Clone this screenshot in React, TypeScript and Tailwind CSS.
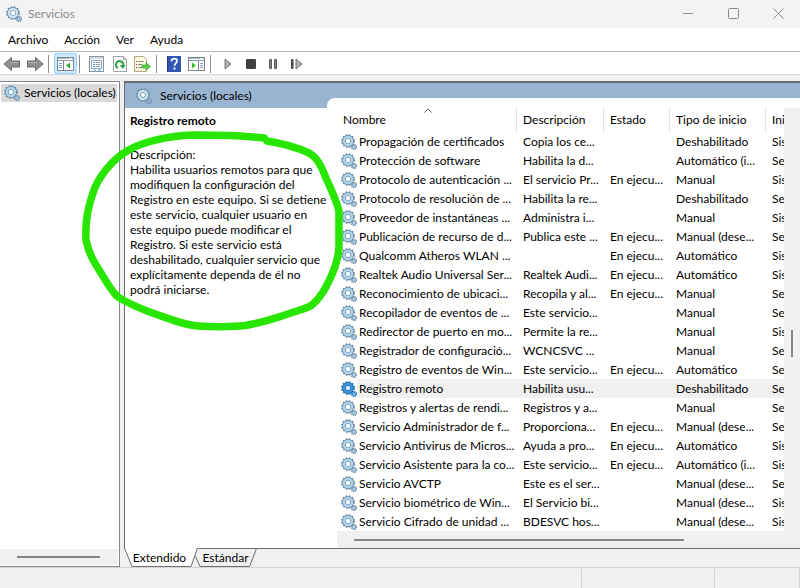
import React, { useState } from "react";

type Service = {
  name: string;
  description: string;
  status: string;
  startup: string;
  logon: string;
};

const running = "En ejecu...";

const services: Service[] = [
  { name: "Propagación de certificados", description: "Copia los ce...", status: "", startup: "Deshabilitado", logon: "Sistema local" },
  { name: "Protección de software", description: "Habilita la d...", status: "", startup: "Automático (i...", logon: "Servicio de red" },
  { name: "Protocolo de autenticación ...", description: "El servicio Pr...", status: running, startup: "Manual", logon: "Sistema local" },
  { name: "Protocolo de resolución de ...", description: "Habilita la re...", status: "", startup: "Deshabilitado", logon: "Servicio local" },
  { name: "Proveedor de instantáneas ...", description: "Administra i...", status: "", startup: "Manual", logon: "Sistema local" },
  { name: "Publicación de recurso de d...", description: "Publica este ...", status: running, startup: "Manual (dese...", logon: "Servicio local" },
  { name: "Qualcomm Atheros WLAN ...", description: "", status: running, startup: "Automático", logon: "Sistema local" },
  { name: "Realtek Audio Universal Ser...", description: "Realtek Audi...", status: running, startup: "Automático", logon: "Sistema local" },
  { name: "Reconocimiento de ubicaci...", description: "Recopila y al...", status: running, startup: "Manual", logon: "Servicio de red" },
  { name: "Recopilador de eventos de ...", description: "Este servicio...", status: "", startup: "Manual", logon: "Servicio de red" },
  { name: "Redirector de puerto en mo...", description: "Permite la re...", status: "", startup: "Manual", logon: "Sistema local" },
  { name: "Registrador de configuració...", description: "WCNCSVC ...", status: "", startup: "Manual", logon: "Servicio local" },
  { name: "Registro de eventos de Win...", description: "Este servicio...", status: running, startup: "Automático", logon: "Servicio local" },
  { name: "Registro remoto", description: "Habilita usu...", status: "", startup: "Deshabilitado", logon: "Servicio local" },
  { name: "Registros y alertas de rendi...", description: "Registros y a...", status: "", startup: "Manual", logon: "Servicio local" },
  { name: "Servicio Administrador de f...", description: "Proporciona...", status: running, startup: "Manual (dese...", logon: "Servicio local" },
  { name: "Servicio Antivirus de Micros...", description: "Ayuda a pro...", status: running, startup: "Automático", logon: "Sistema local" },
  { name: "Servicio Asistente para la co...", description: "Este servicio...", status: running, startup: "Automático (i...", logon: "Sistema local" },
  { name: "Servicio AVCTP", description: "Este es el ser...", status: "", startup: "Manual (dese...", logon: "Servicio local" },
  { name: "Servicio biométrico de Win...", description: "El Servicio bi...", status: "", startup: "Manual (dese...", logon: "Sistema local" },
  { name: "Servicio Cifrado de unidad ...", description: "BDESVC hos...", status: "", startup: "Manual (dese...", logon: "Sistema local" },
];

const GearIcon = ({ selected = false, pale = false }: { selected?: boolean; pale?: boolean }) => {
  const teeth = selected ? "#1c6fb5" : "#6f8ca8";
  const ring = selected ? "#3f93d6" : pale ? "#cfe5f4" : "#b0d6ec";
  return (
    <svg width="16" height="16" viewBox="0 0 16 16" className="shrink-0" aria-hidden="true">
      <circle cx="7" cy="7" r="5.9" fill="none" stroke={teeth} strokeWidth="2" strokeDasharray="1.8 1.29" />
      <circle cx="7" cy="7" r="4" fill="none" stroke={teeth} strokeWidth="3.8" />
      <circle cx="7" cy="7" r="4" fill="none" stroke={ring} strokeWidth="2.4" />
      <circle cx="7" cy="7" r="2" fill={selected ? "#d6e9f7" : "#fff"} />
      <circle cx="13" cy="13" r="2.5" fill="none" stroke={teeth} strokeWidth="1.5" strokeDasharray="1.1 0.86" />
      <circle cx="13" cy="13" r="1.5" fill="none" stroke={selected ? ring : "#86acca"} strokeWidth="1.5" />
    </svg>
  );
};

const ArrowIcon = ({ flip = false }: { flip?: boolean }) => (
  <svg width="18" height="16" viewBox="0 0 18 16" aria-hidden="true">
    <path
      d={flip ? "M17 8 9.5 1.5V5H1.5v6h8v3.500z" : "M1 8l7.500-6.500V5h8v6h-8v3.500z"}
      fill="#909090"
      stroke="#666"
    />
    <path d={flip ? "M2.500 6.500h8" : "M7.500 6.500h8"} stroke="#b5b5b5" />
  </svg>
);

const WindowIcon = ({ side }: { side: "left" | "right" }) => (
  <svg width="17" height="14" viewBox="0 0 17 14" aria-hidden="true">
    <rect x="0.500" y="0.500" width="16" height="13" fill="#fff" stroke="#7c8794" />
    <path d="M1 1.500h15" stroke="#a9b4c0" />
    <path d="M1 3.500h15" stroke="#8d99a6" />
    <path d="M12 1.500h1M14 1.500h1" stroke="#fff" />
    {side === "left" ? (
      <>
        <path d="M6.500 4v9" stroke="#7c8794" />
        <path d="M2 6.500h3M2 8.500h3M2 10.500h3" stroke="#7ba0cf" />
        <path d="M13 5.500v6l-4-3z" fill="#2fa52a" />
      </>
    ) : (
      <>
        <path d="M10.500 4v9" stroke="#7c8794" />
        <path d="M12 6.500h3M12 8.500h3M12 10.500h3" stroke="#7ba0cf" />
        <path d="M4 5.500v6l4-3z" fill="#2fc52a" />
      </>
    )}
  </svg>
);

const PropertiesIcon = () => (
  <svg width="15" height="16" viewBox="0 0 15 16" aria-hidden="true">
    <rect x="0.500" y="0.500" width="14" height="15" fill="#f8fafc" stroke="#8b949e" />
    <path d="M1 2h13" stroke="#b8c0c8" />
    <rect x="2.500" y="4.500" width="10" height="8" fill="#fff" stroke="#9aaabd" />
    <path d="M4 6.500h2M4 8.500h2M4 10.500h2" stroke="#3f8fd0" />
    <path d="M7 6.500h4M7 8.500h4M7 10.500h4" stroke="#8e9bab" />
    <path d="M5 14h2M9 14h3" stroke="#3fa7dc" />
  </svg>
);

const RefreshIcon = () => (
  <svg width="14" height="16" viewBox="0 0 14 16" aria-hidden="true">
    <path d="M0.500 0.500h10l3 3v12h-13z" fill="#fff" stroke="#a3a3a3" />
    <path d="M10.500 0.500v3h3" fill="none" stroke="#a3a3a3" />
    <path d="M5 12A3.700 3.700 0 1 1 10.300 9.500" fill="none" stroke="#35a545" strokeWidth="2" />
    <path d="M6.500 9h6L10 13z" fill="#35a545" />
  </svg>
);

const ExportIcon = () => (
  <svg width="17" height="16" viewBox="0 0 17 16" aria-hidden="true">
    <path d="M0.500 0.500h9l3 3v12h-12z" fill="#fdf8dc" stroke="#b3a985" />
    <path d="M2 5.500h1M2 8.500h1M2 11.500h1" stroke="#555" />
    <path d="M4 5.500h6M4 8.500h4M4 11.500h4" stroke="#8d8d8d" />
    <path d="M8 9h4V6.500l4.500 4-4.500 4V12H8z" fill="#5dcb4b" stroke="#38a52c" strokeWidth="0.600" />
  </svg>
);

const HelpIcon = () => (
  <svg width="14" height="16" viewBox="0 0 14 16" aria-hidden="true">
    <rect width="14" height="16" fill="#2f56b4" />
    <path d="M0.500 0v16" stroke="#1d3a85" />
    <path d="M4.500 5.200C4.500 1.800 10 2 10 5c0 2-2.500 2.200-2.500 4.800" fill="none" stroke="#fff" strokeWidth="1.800" />
    <rect x="6.500" y="11.500" width="2" height="2" fill="#fff" />
  </svg>
);

const PlayIcon = () => (
  <svg width="8" height="12" viewBox="0 0 8 12" aria-hidden="true">
    <path d="M1 1v10l6-5z" fill="#b0b0b0" stroke="#777" />
  </svg>
);

const StopIcon = () => (
  <svg width="10" height="10" viewBox="0 0 10 10" aria-hidden="true">
    <rect width="10" height="10" rx="1" fill="#404040" />
  </svg>
);

const PauseIcon = () => (
  <svg width="9" height="10" viewBox="0 0 9 10" aria-hidden="true">
    <path d="M0.500 0.500h2v9h-2zM5.500 0.500h2v9h-2z" fill="#808080" stroke="#5e5e5e" />
  </svg>
);

const RestartIcon = () => (
  <svg width="13" height="12" viewBox="0 0 13 12" aria-hidden="true">
    <path d="M1.500 1.500h1.500v9H1.500z" fill="#555" stroke="#444" />
    <path d="M6 1v10l6-5z" fill="#b0b0b0" stroke="#777" />
  </svg>
);

type ToolProps = { label: string; active?: boolean; children: React.ReactNode };

const Tool = ({ label, active, children }: ToolProps) => (
  <button
    aria-label={label}
    className={`flex h-[21px] w-[23px] items-center justify-center ${
      active ? "rounded-xs border border-[#99d1ff] bg-[#cce8ff]" : ""
    }`}
  >
    {children}
  </button>
);

const Separator = () => (
  <div className="flex h-[21px] w-2 items-center pl-0.5">
    <div className="h-[18px] w-px bg-[#8c8c8c]" />
  </div>
);

const TitleBar = () => (
  <header className="flex h-7 items-center bg-[#f3f3f3] pl-1.5 text-[#8a8a8a]">
    <GearIcon pale />
    <h1 className="ml-1.5 flex-1">Servicios</h1>
    {[
      { label: "Minimizar", d: "M0 5.500h10" },
      { label: "Maximizar", d: "M1.500 0.500h8a1 1 0 0 1 1 1v8a1 1 0 0 1-1 1h-8a1 1 0 0 1-1-1v-8a1 1 0 0 1 1-1z" },
      { label: "Cerrar", d: "M0.500 0.500l10 10M10.500 0.500l-10 10" },
    ].map((c) => (
      <button key={c.label} aria-label={c.label} className="flex h-7 w-[45px] items-center justify-center pb-0.5 pl-0.5">
        <svg width="11" height="11" viewBox="0 0 11 11" fill="none" stroke="#8a8a8a" aria-hidden="true">
          <path d={c.d} />
        </svg>
      </button>
    ))}
  </header>
);

const Toolbar = () => (
  <div className="flex h-[23px] items-end border-b border-[#d9d9d9] bg-white">
    <Tool label="Atrás"><ArrowIcon /></Tool>
    <Tool label="Adelante"><ArrowIcon flip /></Tool>
    <Separator />
    <Tool label="Mostrar árbol de consola" active><WindowIcon side="left" /></Tool>
    <Separator />
    <Tool label="Propiedades"><PropertiesIcon /></Tool>
    <Tool label="Actualizar"><RefreshIcon /></Tool>
    <Tool label="Exportar lista"><ExportIcon /></Tool>
    <Separator />
    <Tool label="Ayuda"><HelpIcon /></Tool>
    <Tool label="Mostrar panel de acciones"><WindowIcon side="right" /></Tool>
    <Separator />
    <Tool label="Iniciar servicio"><PlayIcon /></Tool>
    <Tool label="Detener servicio"><StopIcon /></Tool>
    <Tool label="Pausar servicio"><PauseIcon /></Tool>
    <Tool label="Reiniciar servicio"><RestartIcon /></Tool>
  </div>
);

const TreePanel = () => (
  <nav className="flex w-[120px] shrink-0 flex-col border border-l-0 border-[#828790] bg-white">
    <div className="flex-1 pt-0.5 pr-0.5 pl-px">
      <button className="flex h-[18px] w-full items-center gap-1 bg-[#d9d9d9] pl-[3px] whitespace-nowrap">
        <GearIcon />
        Servicios (locales)
      </button>
    </div>
    <div className="mr-px mb-px flex h-4 items-center bg-[#f0f0f0] pr-[18px] pl-[17px]">
      <div className="h-0.5 w-full bg-[#868686]" />
    </div>
  </nav>
);

const headings = ["Nombre", "Descripción", "Estado", "Tipo de inicio", "Iniciar sesión como"];

const ServiceTable = () => {
  const [selected, setSelected] = useState("Registro remoto");
  return (
    <table className="w-full table-fixed border-separate border-spacing-0 text-left whitespace-nowrap">
      <colgroup>
        <col className="w-[180px]" />
        <col className="w-[87px]" />
        <col className="w-[66px]" />
        <col className="w-[96px]" />
        <col />
      </colgroup>
      <thead>
        <tr className="h-6">
          {headings.map((h, i) => (
            <th
              key={h}
              className={`relative overflow-hidden p-0 pl-1.5 font-normal ${
                i < headings.length - 1 ? "border-r border-[#e2e2e2]" : ""
              }`}
            >
              {h}
              {i === 0 && (
                <svg className="absolute top-0 left-[87px]" width="8" height="5" viewBox="0 0 8 5" aria-hidden="true">
                  <path d="M0.500 4.500 4 1l3.500 3.500" fill="none" stroke="#606060" />
                </svg>
              )}
            </th>
          ))}
        </tr>
      </thead>
      <tbody>
        {services.map((s) => {
          const active = s.name === selected;
          const cell = `overflow-hidden p-0 pl-1.5 ${active ? "bg-[#f0f0f0]" : ""}`;
          return (
            <tr key={s.name} className="h-[19px]" onClick={() => setSelected(s.name)}>
              <td className="overflow-hidden p-0 pl-1">
                <div className="flex items-center">
                  <GearIcon selected={active} />
                  <span className={`h-[19px] flex-1 pl-0.5 leading-5 ${active ? "bg-[#f0f0f0]" : ""}`}>{s.name}</span>
                </div>
              </td>
              <td className={cell}>{s.description}</td>
              <td className={cell}>{s.status}</td>
              <td className={cell}>{s.startup}</td>
              <td className={cell}>{s.logon}</td>
            </tr>
          );
        })}
      </tbody>
    </table>
  );
};

const Tabs = () => (
  <div className="flex h-[19px]">
    <button className="relative w-[71px]">
      <svg className="absolute inset-0" width="76" height="19" viewBox="0 0 76 19" aria-hidden="true">
        <path d="M0 0h73l-6 18.500H8z" fill="#fff" />
        <path d="M0.500 0 8 18.500h59L73.500 0" fill="none" stroke="#6e6e6e" />
      </svg>
      <span className="relative">Extendido</span>
    </button>
    <button className="relative w-[61px]">
      <svg className="absolute inset-0" width="62" height="19" viewBox="0 0 62 19" aria-hidden="true">
        <path d="M0.500 8.500 5 18.500h49.500L61.500 0.500H3.500" fill="none" stroke="#6e6e6e" />
      </svg>
      <span className="relative">Estándar</span>
    </button>
    <div className="flex-1 border-t border-[#696969]" />
  </div>
);

const HighlightStroke = () => (
  <svg
    className="pointer-events-none absolute top-[50px] -left-[44px]"
    width="264"
    height="202"
    viewBox="80 131 264 202"
    fill="none"
    stroke="#28e600"
    strokeWidth="7.500"
    strokeLinecap="round"
    strokeLinejoin="round"
    aria-hidden="true"
  >
    <path d="M264 138C240 135 215 135 193 135C170 136 143 141 127 151C112 160 98 177 93 193C88 207 85 224 86 240C89 254 94 262 101 273C107 283 112 292 118 297C127 303 137 307 147 311C166 318 184 325 198 326C212 327 226 327 240 326C255 325 272 319 285 315C295 311 307 309 312 305C321 297 325 289 330 279C336 266 339 255 339 245L339 211C336 199 330 187 326 178C322 168 318 158 309 153C296 147 280 143 267 141" />
  </svg>
);

const ServicesPanel = () => (
  <main className="relative flex min-w-0 flex-1 flex-col">
    <div className="flex flex-1 flex-col border-t-2 border-l border-[#6b6b6b] bg-white">
      <div className="flex h-[25px] items-center gap-2 bg-[#99b4d1] pl-[11px]">
        <GearIcon pale />
        <h2>Servicios (locales)</h2>
      </div>
      <div className="flex flex-1">
        <section className="w-[212px] shrink-0 pt-[5px] pl-[5px]">
          <h3 className="font-bold">Registro remoto</h3>
          <p className="pt-[18px] leading-[15px] whitespace-nowrap">
            Descripción:
            <br />
            Habilita usuarios remotos para que
            <br />
            modifiquen la configuración del
            <br />
            Registro en este equipo. Si se detiene
            <br />
            este servicio, cualquier usuario en
            <br />
            este equipo puede modificar el
            <br />
            Registro. Si este servicio está
            <br />
            deshabilitado, cualquier servicio que
            <br />
            explícitamente dependa de él no
            <br />
            podrá iniciarse.
          </p>
        </section>
        <section className="flex min-w-0 flex-1 flex-col">
          <div className="relative z-10 -mt-[10px] -ml-[10px] h-[10px] rounded-tl-[8px] bg-white" />
          <div className="flex flex-1">
            <div className="flex min-w-0 flex-1 flex-col">
              <ServiceTable />
              <div className="flex flex-1 items-center bg-[#f0f0f0] pr-[100px] pl-[17px]">
                <div className="h-0.5 w-full bg-[#868686]" />
              </div>
            </div>
            <div className="flex w-4 flex-col items-center bg-[#f0f0f0]">
              <div className="flex-1" />
              <div className="h-[27px] w-0.5 bg-[#868686]" />
              <div className="h-[191px]" />
            </div>
          </div>
        </section>
      </div>
    </div>
    <Tabs />
    <HighlightStroke />
  </main>
);

export default function App() {
  return (
    <div className="flex min-h-screen flex-col bg-[#f0f0f0] font-[Lato,'Open_Sans',sans-serif] text-[12px] leading-4 text-black">
      <TitleBar />
      <nav className="flex h-6 items-center gap-4 border-b border-[#b5b5b8] bg-white pl-2">
        <button>Archivo</button>
        <button>Acción</button>
        <button>Ver</button>
        <button>Ayuda</button>
      </nav>
      <Toolbar />
      <div className="flex flex-1 gap-1 pt-1.5">
        <TreePanel />
        <ServicesPanel />
      </div>
      <footer className="flex h-[21px] border-t border-[#d4d4d4] pt-px">
        <div className="flex-1 border-r border-[#d4d4d4]" />
        <div className="w-[133px] border-r border-[#d4d4d4]" />
        <div className="w-[85px] border-r border-[#d4d4d4]" />
      </footer>
    </div>
  );
}
